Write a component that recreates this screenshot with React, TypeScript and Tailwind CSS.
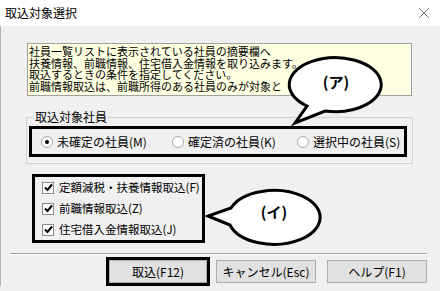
import React from 'react'

const font = { fontFamily: '"Noto Sans CJK JP", "Liberation Sans", sans-serif' }

const infoLines = [
  '社員一覧リストに表示されている社員の摘要欄へ',
  '扶養情報、前職情報、住宅借入金情報を取り込みます。',
  '取込するときの条件を指定してください。',
  '前職情報取込は、前職所得のある社員のみが対象と',
]

const targets = [
  { label: '未確定の社員(M)', checked: true, width: 'w-[131px]' },
  { label: '確定済の社員(K)', checked: false, width: 'w-[125px]' },
  { label: '選択中の社員(S)', checked: false, width: 'w-[100px]' },
]

const imports = [
  '定額減税・扶養情報取込(F)',
  '前職情報取込(Z)',
  '住宅借入金情報取込(J)',
]

const Radio = ({ checked }: { checked: boolean }) => (
  <span className="flex h-[12px] w-[12px] shrink-0 items-center justify-center rounded-full border border-[#a8a8a8] bg-white">
    {checked && <span className="h-[4px] w-[4px] rounded-full bg-black" />}
  </span>
)

const CheckBox = () => (
  <span className="flex h-[12px] w-[12px] shrink-0 items-center justify-center border border-[#8a8a8a] bg-white">
    <svg width="9" height="9" viewBox="0 0 9 9">
      <path d="M1 4.5 L3.5 7 L8 1.5" fill="none" stroke="#000" strokeWidth="2" />
    </svg>
  </span>
)

const Button = ({ label, className }: { label: string; className?: string }) => (
  <button
    type="button"
    className={`flex h-[23px] items-center justify-center border border-[#adadad] bg-[#e1e1e1] text-[12px] leading-none text-black ${className ?? ''}`}
  >
    {label}
  </button>
)

const Callouts = () => (
  <svg
    className="pointer-events-none absolute left-0 top-0"
    width="440"
    height="291"
    viewBox="0 0 440 291"
  >
    <path
      d="M307 106 A46 27 0 1 1 325 111 L295 123 Z"
      fill="#fff"
      stroke="#000"
      strokeWidth="3"
    />
    <text x="336" y="88" textAnchor="middle" fontSize="15" fontWeight="700" fill="#000" style={font}>
      (ア)
    </text>
    <path
      d="M231 208 A46 27 0 1 1 230 225 L208 216 Z"
      fill="#fff"
      stroke="#000"
      strokeWidth="3"
    />
    <text x="274" y="218" textAnchor="middle" fontSize="15" fontWeight="700" fill="#000" style={font}>
      (イ)
    </text>
  </svg>
)

export default function App() {
  return (
    <div className="relative h-[291px] w-[440px] overflow-hidden bg-[#f0f0f0] text-black" style={font}>
      {/* title bar */}
      <div className="flex h-[26px] items-center justify-between bg-white pl-[5px] pr-[11px]">
        <span className="text-[12px] leading-none">取込対象選択</span>
        <svg width="10" height="10" viewBox="0 0 10 10">
          <path d="M0 0 L10 10 M10 0 L0 10" stroke="#777" strokeWidth="1" />
        </svg>
      </div>

      <div className="flex flex-col border-l border-[#b4b4b4]">
        {/* info */}
        <div className="ml-[26px] mt-[17px] h-[53px] w-[385px] border border-[#a0a0a0] bg-[#ffffe1] pl-[1px] pt-[2px]">
          {infoLines.map((line) => (
            <div key={line} className="whitespace-nowrap text-[11px] leading-[11.7px]">
              {line}
            </div>
          ))}
        </div>

        {/* target employees */}
        <fieldset className="ml-[25px] mt-[14px] w-[387px] border border-[#d0d0d0] px-[2px] pb-[6px] pt-[2px]">
          <legend className="ml-[5px] px-[1px] text-[12px] leading-[14px]">取込対象社員</legend>
          <div className="flex h-[31px] w-[378px] items-center border-[3px] border-black pl-[9px]">
            {targets.map((t) => (
              <label key={t.label} className={`flex items-center gap-[4px] whitespace-nowrap text-[12px] ${t.width}`}>
                <Radio checked={t.checked} />
                <span>{t.label}</span>
              </label>
            ))}
          </div>
        </fieldset>

        {/* import options */}
        <div className="ml-[31px] mt-[10px] flex h-[69px] w-[173px] flex-col justify-center border-[3px] border-black pl-[7px]">
          {imports.map((label) => (
            <label key={label} className="flex h-[21px] items-center gap-[5px] whitespace-nowrap text-[11.5px]">
              <CheckBox />
              <span>{label}</span>
            </label>
          ))}
        </div>

        {/* separator */}
        <div className="ml-[9px] mt-[10px] w-[417px] border-t border-b border-t-[#a0a0a0] border-b-white" />

        {/* buttons */}
        <div className="ml-[105px] mt-[2px] flex items-center">
          <div className="border-[3px] border-black">
            <Button label="取込(F12)" className="w-[98px]" />
          </div>
          <Button label="キャンセル(Esc)" className="ml-[6px] w-[100px]" />
          <Button label="ヘルプ(F1)" className="ml-[11px] w-[100px]" />
        </div>
      </div>

      <Callouts />
    </div>
  )
}
